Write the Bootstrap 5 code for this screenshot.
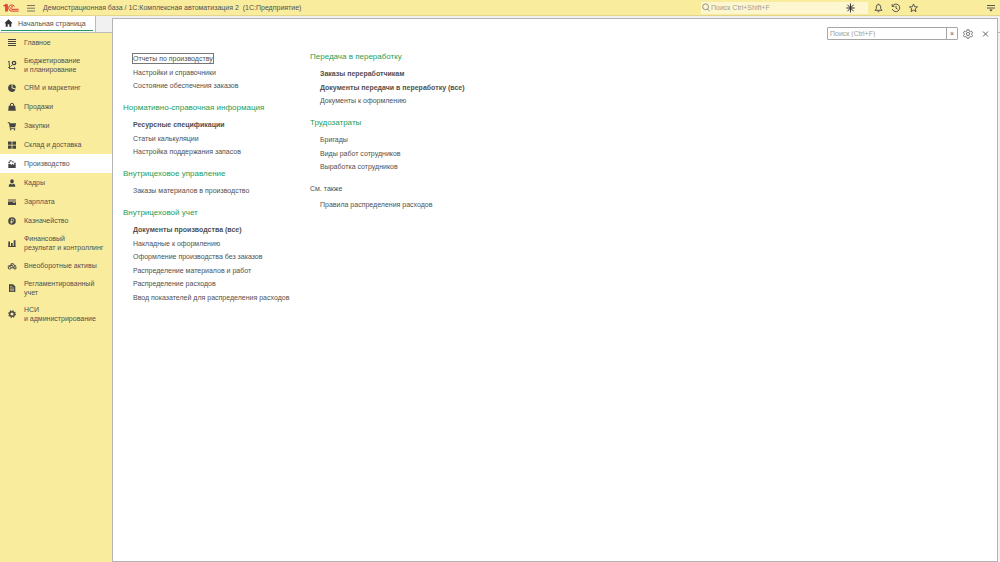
<!DOCTYPE html>
<html lang="ru">
<head>
<meta charset="utf-8">
<meta name="viewport" content="width=device-width, initial-scale=1">
<title>1С:Комплексная автоматизация 2</title>
<link href="https://cdn.jsdelivr.net/npm/bootstrap@5.3.0/dist/css/bootstrap.min.css" rel="stylesheet">
<style>
  :root { --yellow: #faec9d; --ink: #505050; --green: #1f9d55; }
  body { font: 7px/9px "Liberation Sans", Arial, sans-serif; color: var(--ink); background: #f1f1f1; }
  a { color: inherit; text-decoration: none; }
  svg { display: block; flex: none; }
  button { border: 0; background: none; padding: 0; color: inherit; }
  h1, h2 { font: inherit; margin: 0; }
  .topbar { height: 16px; background: var(--yellow); border-bottom: 1px solid #e3d58b; padding: 0 5px 0 3px; }
  .topbar h1 { font-size: 7px; white-space: pre; }
  .top-search { width: 167px; height: 12px; background: #fdf6cf; padding: 0 13px 0 1px; }
  .top-search input { border: 0; background: none; padding: 0 1px; font-size: 7px; color: #444; outline: 0; min-width: 0; }
  .top-tools { margin: 0 69px 0 6px; }
  input::placeholder { color: #a09e96; opacity: 1; }
  .tabs { height: 17px; border-bottom: 1px solid #bbb; }
  .tab-home { width: 96px; background: #fff; border-right: 1px solid #bbb; padding: 0 2px 0 1px; }
  .tab-home a { height: 15px; padding-left: 3px; gap: 5px; border-bottom: 1px solid var(--green); }
  .sidebar { width: 112px; background: var(--yellow); }
  .sidebar a { min-height: 19px; padding: 4px 0 4px 7px; gap: 7px; }
  .sidebar a.current { background: #fff; }
  .sidebar svg { width: 10px; height: 10px; }
  .panel { top: 18px; left: 112px; right: 2px; bottom: 0; background: #fff; border: 1px solid #b4b4b4; }
  .tools { padding: 8px 8px 0; gap: 5px; }
  .find { width: 131px; height: 13px; border: 1px solid #a6a6a6; border-radius: 1px; }
  .find input { border: 0; padding: 0 2px; font-size: 7px; outline: 0; min-width: 0; }
  .find button { width: 11px; border-left: 1px solid #a6a6a6; font-size: 7px; line-height: 9px; color: #555; }
  .columns { padding: 10px; }
  .menu-col { width: 187px; }
  .menu-col section { margin-bottom: 8px; }
  .menu-col h2 { font-size: 8px; line-height: 14px; margin-bottom: 3px; color: var(--green); }
  .menu-col h2.also { font-size: 7px; color: var(--ink); margin-bottom: 2px; }
  .menu-col ul { padding-left: 10px; margin: 0; list-style: none; white-space: nowrap; }
  .menu-col li { height: 14px; line-height: 14px; }
  .menu-col li:nth-child(even) { height: 13px; line-height: 13px; }
  .first-col { padding-top: 2px; }
  .focused { outline: 1px solid #777; padding: 1px 0; }
</style>
</head>
<body class="vh-100 d-flex flex-column position-relative overflow-hidden">

<header class="topbar d-flex align-items-center flex-shrink-0">
  <svg width="16" height="10" viewBox="0 0 16 10" fill="none" stroke="#e0352f" stroke-width="1.3"><path d="M.5 3.3 2.8 1.8V8.6M4.2 1.2V8.6"/><path d="M11.5 3.6A3.1 3.1 0 1 0 8.9 8.1H15.6M10 4.1A1.3 1.3 0 1 0 8.9 6.3H15.6" stroke-width="1"/></svg>
  <button type="button" aria-label="Меню" class="ms-2"><svg width="8" height="8" viewBox="0 0 8 8" stroke="#555" stroke-width=".8"><path d="M0 1.5H8M0 4.2H8M0 7H8"/></svg></button>
  <h1 class="ms-2">Демонстрационная база / 1С:Комплексная автоматизация 2  (1С:Предприятие)</h1>
  <div class="top-search d-flex align-items-center ms-auto">
    <svg width="8" height="9" viewBox="0 0 8 9" fill="none" stroke="#777" stroke-width=".8"><circle cx="3.6" cy="3.8" r="2.9"/><path d="m5.6 6 2 2.3"/></svg>
    <input class="flex-fill" type="text" aria-label="Глобальный поиск" placeholder="Поиск Ctrl+Shift+F">
    <svg width="9" height="10" viewBox="0 0 9 10" stroke="#333" stroke-width="1"><path d="M4.5.5V9.5M.3 5H8.7M1.5 1.8 7.5 8.2M7.5 1.8 1.5 8.2"/></svg>
  </div>
  <nav class="top-tools d-flex align-items-center">
    <button type="button" aria-label="Уведомления"><svg width="9" height="10" viewBox="0 0 9 10" fill="none" stroke="#444" stroke-width=".9"><path d="M1 7.3 2.3 5.8V3.8a2.2 2.2 0 0 1 4.4 0v2L8 7.3ZM4.5.7v1M3.6 8.3a1 1 0 0 0 1.8 0"/></svg></button>
    <button type="button" aria-label="История" class="ms-2"><svg width="10" height="10" viewBox="0 0 10 10" fill="none" stroke="#444" stroke-width=".9"><path d="M1.5 3.2A3.8 3.8 0 1 1 1.3 6M1.2 1.2v2.2h2.2M5 2.8v2.4l1.7 1"/></svg></button>
    <button type="button" aria-label="Избранное" class="ms-2"><svg width="9" height="10" viewBox="0 0 9 10" fill="none" stroke="#444" stroke-width=".9"><path d="m4.5 1 1.1 2.7 2.9.2-2.2 1.9.7 2.8-2.5-1.5L2 8.6l.7-2.8L.5 3.9l2.9-.2Z"/></svg></button>
  </nav>
  <button type="button" aria-label="Настройка окна"><svg width="8" height="8" viewBox="0 0 8 8" stroke="#444" stroke-width=".9"><path d="M0 1.5H8M0 4H8"/><path d="M2.2 5.6h3.6L4 7.5Z" fill="#444" stroke="none"/></svg></button>
</header>

<div class="tabs d-flex flex-shrink-0">
  <div class="tab-home"><a href="#" class="d-flex align-items-center"><svg width="9" height="8" viewBox="0 0 9 8" fill="#333"><path d="M4.5.3.6 4l.6.6.5-.4v3.5h2V5.3h1.6v2.4h2V4.2l.5.4.6-.6Z"/></svg>Начальная страница</a></div>
</div>

<nav class="sidebar flex-fill" aria-label="Разделы">
  <a href="#" class="d-flex align-items-center"><svg viewBox="0 0 10 10" stroke="#444" stroke-width="1"><path d="M1 1.5H9M1 3.5H9M1 5.5H9M1 7.5H9"/></svg>Главное</a>
  <a href="#" class="d-flex align-items-center"><svg viewBox="0 0 10 10" fill="none" stroke="#444" stroke-width=".9"><path d="M1 2 2.2 1.2V5M2.5 4.5v4H8M1.2 7l1.3 1.5M7 7.3l1.3 1.2L7 9.5M3.5 6.7 5.2 5"/><circle cx="7" cy="3" r="1.7" stroke-width="1.3"/></svg><span>Бюджетирование<br>и планирование</span></a>
  <a href="#" class="d-flex align-items-center"><svg viewBox="0 0 10 10" fill="#444"><path d="M4.6 1.3A3.8 3.8 0 1 0 8.5 6.4L4.6 5.3ZM5.5 1.2V4.4l3.3 1A3.8 3.8 0 0 0 5.5 1.2Z"/></svg>CRM и маркетинг</a>
  <a href="#" class="d-flex align-items-center"><svg viewBox="0 0 10 10"><path d="M1.8 3.8h6.4l.6 5H1.2Z" fill="#444"/><path d="M3.3 5V3a1.7 1.7 0 0 1 3.4 0v2" fill="none" stroke="#444"/></svg>Продажи</a>
  <a href="#" class="d-flex align-items-center"><svg viewBox="0 0 10 10" fill="#444"><path d="M.8 1.3h1.8l.5 1h6L8.2 6.2H3.5l.2.8h4.5v.8H2.9L2 2.2H.8Z"/><circle cx="3.7" cy="8.7" r=".8"/><circle cx="7.5" cy="8.7" r=".8"/></svg>Закупки</a>
  <a href="#" class="d-flex align-items-center"><svg viewBox="0 0 10 10" fill="#444"><path d="M1 1.5h3.6v3.2H1ZM5.4 1.5H9v3.2H5.4ZM1 5.5h3.6v3.2H1ZM5.4 5.5H9v3.2H5.4Z"/></svg>Склад и доставка</a>
  <a href="#" class="d-flex align-items-center current" aria-current="page"><svg viewBox="0 0 10 10" fill="#444"><path d="M1.3 9V4.8l.5-.1h1L5 6V4.8L7.2 6V3.8h1.5V9ZM1.4 2.8h1.5v1.3H1.4ZM2.6 1.3h2v1.1h-2ZM5.2 2.2H6.6v1.2H5.2Z"/></svg>Производство</a>
  <a href="#" class="d-flex align-items-center"><svg viewBox="0 0 10 10" fill="#444"><path d="M3.2 3.2a1.8 1.9 0 1 1 3.6 0C6.8 4.5 6 5.4 5 5.4S3.2 4.5 3.2 3.2ZM1.7 8.8c0-2 .8-2.8 2-3L5 6.7l1.3-.9c1.2.2 2 1 2 3Z"/></svg>Кадры</a>
  <a href="#" class="d-flex align-items-center"><svg viewBox="0 0 10 10" fill="#444"><path d="M1 2.4h8v1.2H1ZM1 4.5h8V8H1Z"/><path d="M6.2 5h2v.7h-2Z" fill="#faec9d"/></svg>Зарплата</a>
  <a href="#" class="d-flex align-items-center"><svg viewBox="0 0 10 10" fill="none"><circle cx="5" cy="5" r="3.8" fill="#444"/><path d="M4.3 7.6V3h1.2a1.2 1.2 0 0 1 0 2.6H3.4M3.4 6.6H5.6" stroke="#faec9d" stroke-width=".7"/></svg>Казначейство</a>
  <a href="#" class="d-flex align-items-center"><svg viewBox="0 0 10 10" fill="#444"><path d="M1.3 3.5h1.7v5H1.3ZM4 5h1.7v3.5H4ZM6.7 2.2h1.8v6.3H6.7ZM1.2 8h7.5v.9H1.2Z"/></svg><span>Финансовый<br>результат и контроллинг</span></a>
  <a href="#" class="d-flex align-items-center"><svg viewBox="0 0 10 10" fill="none" stroke="#444"><circle cx="2.6" cy="6.8" r="1.3"/><circle cx="7.9" cy="6.9" r="1.2"/><path d="M.8 5.3 3 4.6h2.8l.5 2.2H4.2M4 4.5V2.8h2.5l1 2h1.7"/></svg>Внеоборотные активы</a>
  <a href="#" class="d-flex align-items-center"><svg viewBox="0 0 10 10"><path d="M2 1.3h4L8.3 3.5V9H2Z" fill="#444"/><path d="M3 3.4h2.5M3 5h4.2M3 6.4h4.2M3 7.8h4.2" stroke="#faec9d" stroke-width=".6"/></svg><span>Регламентированный<br>учет</span></a>
  <a href="#" class="d-flex align-items-center"><svg viewBox="0 0 10 10" fill="none" stroke="#444"><circle cx="5" cy="5" r="2.3" stroke-width="1.4"/><circle cx="5" cy="5" r="3.3" stroke-width="1.2" stroke-dasharray="1.3 1.292"/></svg><span>НСИ<br>и администрирование</span></a>
</nav>

<main class="panel position-absolute overflow-auto">
  <div class="tools d-flex align-items-center justify-content-end">
    <div class="find d-flex"><input class="flex-fill" type="text" aria-label="Поиск по разделу" placeholder="Поиск (Ctrl+F)"><button type="button" aria-label="Очистить">×</button></div>
    <button type="button" aria-label="Настройки"><svg width="10" height="10" viewBox="0 0 10 10" fill="none" stroke="#555" stroke-width=".8"><path d="M4 .8h2l.3 1.3 1.2.6 1.2-.4.9 1.6-.9.9v.6l.9.9-.9 1.6-1.2-.4-1.2.6L6 9.2H4l-.3-1.1-1.2-.6-1.2.4-.9-1.6.9-.9v-.6L.4 3.9l.9-1.6 1.2.4 1.2-.6Z"/><circle cx="5" cy="5" r="1.6"/></svg></button>
    <button type="button" aria-label="Закрыть" class="ms-1"><svg width="7" height="8" viewBox="0 0 7 8" stroke="#555" stroke-width=".9"><path d="m1 1.5 5 5M6 1.5l-5 5"/></svg></button>
  </div>
  <div class="columns d-flex">
    <div class="menu-col first-col">
      <section><ul>
        <li><a href="#" class="focused">Отчеты по производству</a></li>
        <li><a href="#">Настройки и справочники</a></li>
        <li><a href="#">Состояние обеспечения заказов</a></li>
      </ul></section>
      <section><h2>Нормативно-справочная информация</h2><ul>
        <li><a href="#" class="fw-bold">Ресурсные спецификации</a></li>
        <li><a href="#">Статьи калькуляции</a></li>
        <li><a href="#">Настройка поддержания запасов</a></li>
      </ul></section>
      <section><h2>Внутрицеховое управление</h2><ul>
        <li><a href="#">Заказы материалов в производство</a></li>
      </ul></section>
      <section><h2>Внутрицеховой учет</h2><ul>
        <li><a href="#" class="fw-bold">Документы производства (все)</a></li>
        <li><a href="#">Накладные к оформлению</a></li>
        <li><a href="#">Оформление производства без заказов</a></li>
        <li><a href="#">Распределение материалов и работ</a></li>
        <li><a href="#">Распределение расходов</a></li>
        <li><a href="#">Ввод показателей для распределения расходов</a></li>
      </ul></section>
    </div>
    <div class="menu-col">
      <section><h2>Передача в переработку</h2><ul>
        <li><a href="#" class="fw-bold">Заказы переработчикам</a></li>
        <li><a href="#" class="fw-bold">Документы передачи в переработку (все)</a></li>
        <li><a href="#">Документы к оформлению</a></li>
      </ul></section>
      <section><h2>Трудозатраты</h2><ul>
        <li><a href="#">Бригады</a></li>
        <li><a href="#">Виды работ сотрудников</a></li>
        <li><a href="#">Выработка сотрудников</a></li>
      </ul></section>
      <section><h2 class="also">См. также</h2><ul>
        <li><a href="#">Правила распределения расходов</a></li>
      </ul></section>
    </div>
  </div>
</main>
<script src="https://cdn.jsdelivr.net/npm/bootstrap@5.3.0/dist/js/bootstrap.bundle.min.js"></script>
</body>
</html>
